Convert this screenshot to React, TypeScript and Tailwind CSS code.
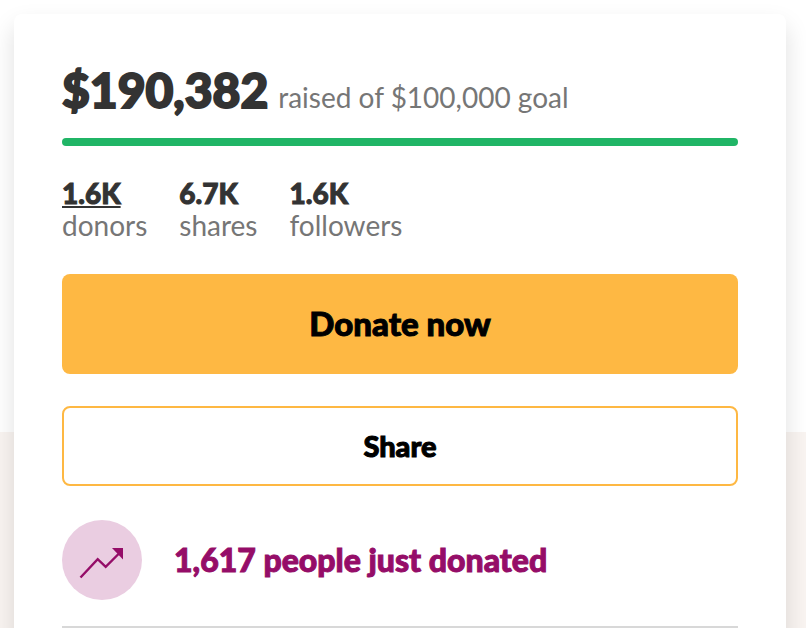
const stats = [
  { value: "1.6K", label: "donors" },
  { value: "6.7K", label: "shares" },
  { value: "1.6K", label: "followers" },
]

const TrendIcon = () => (
  <svg className="h-20 w-20" viewBox="0 0 80 80" fill="none" aria-hidden="true">
    <path d="M18.500 57.500 35.700 39.200 43.700 46.800 57.500 33" stroke="#950d68" strokeWidth="2.400" />
    <path d="M50 28H61V39.500Z" fill="#950d68" />
  </svg>
)

const App = () => {
  return (
    <div className="relative h-screen overflow-hidden bg-white pt-3.5 pr-5 pl-3.5 font-['Lato',sans-serif]">
      <div className="absolute inset-x-0 top-[432px] bottom-0 bg-[#f9f4f1]" />
      <main className="relative rounded-lg bg-white px-12 pt-12 pb-12 shadow-[0_12px_24px_rgba(0,0,0,0.13)]">
        <div className="flex items-baseline gap-2.5">
          <h2 className="text-[48px] leading-[56px] font-black text-[#333333] [-webkit-text-stroke:2px_#333333]">$190,382</h2>
          <span className="text-[28px] leading-8 text-[#767676]">raised of $100,000 goal</span>
        </div>
        <div className="mt-5 h-2 rounded-full bg-[#20b566]" />
        <ul className="mt-[31px] flex gap-8 text-[28px] leading-8">
          {stats.map((stat) => (
            <li key={stat.label}>
              {stat.label === "donors" ? (
                <a href="#donors" className="block font-black text-[#333333] underline [-webkit-text-stroke:1px_#333333]">{stat.value}</a>
              ) : (
                <span className="block font-black text-[#333333] [-webkit-text-stroke:1px_#333333]">{stat.value}</span>
              )}
              <span className="block text-[#767676]">{stat.label}</span>
            </li>
          ))}
        </ul>
        <button className="mt-[33px] block h-[100px] w-full rounded-lg bg-[#feb843] text-[33px] font-black text-black [-webkit-text-stroke:1px_#000000]">
          Donate now
        </button>
        <button className="mt-8 block h-20 w-full rounded-lg border-2 border-[#feb843] bg-white text-[29px] font-black text-black [-webkit-text-stroke:1px_#000000]">
          Share
        </button>
        <div className="mt-[34px] flex items-center gap-8">
          <div className="h-20 w-20 shrink-0 rounded-full bg-[#eacde1]">
            <TrendIcon />
          </div>
          <p className="text-[32px] leading-10 font-black text-[#950d68] [-webkit-text-stroke:1px_#950d68]">1,617 people just donated</p>
        </div>
        <hr className="mt-[26px] border-t-2 border-[#d8d8d8]" />
      </main>
    </div>
  )
}
export default App
